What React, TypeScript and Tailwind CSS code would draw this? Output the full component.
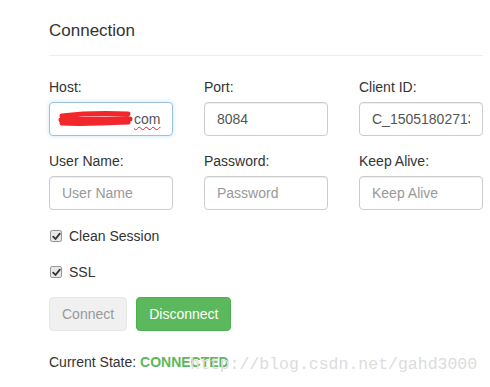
import React from 'react';

const fieldClass =
  'h-[34px] w-full rounded-[4px] border border-[#ccc] bg-white px-[12px] text-[14px] text-[#555] placeholder:text-[#999] shadow-[inset_0_1px_1px_rgba(0,0,0,0.075)] outline-none';

const CheckMark: React.FC = () => (
  <span className="flex h-[12px] w-[12px] items-center justify-center rounded-[2px] border border-[#9a9a9a] bg-[#e8e8e8]">
    <svg width="9" height="9" viewBox="0 0 9 9" fill="none">
      <path d="M1.2 4.6 L3.5 7 L7.8 1.6" stroke="#333" strokeWidth="1.8" strokeLinecap="round" strokeLinejoin="round" />
    </svg>
  </span>
);

const Field: React.FC<{ label: string; children: React.ReactNode }> = ({ label, children }) => (
  <div className="flex flex-col gap-[5px]">
    <label className="text-[14px] leading-[20px] text-[#333]">{label}</label>
    {children}
  </div>
);

export default function App() {
  return (
    <div
      className="relative h-[387px] w-[490px] overflow-hidden bg-white pl-[49px] pt-[21px]"
      style={{ fontFamily: '"Liberation Sans", Arial, sans-serif' }}
    >
      <div className="w-[434px] border-b border-[#eee] pb-[14px]">
        <h4 className="text-[17px] leading-[20px] text-[#333]">Connection</h4>
      </div>

      <div className="mt-[21px] grid w-[434px] grid-cols-[124px_124px_124px] gap-x-[31px] gap-y-[15px]">
        <Field label="Host:">
          <div className="flex h-[34px] w-full items-center rounded-[4px] border border-[#9cc2e2] bg-white pl-[6px] text-[14px] text-[#555] shadow-[0_0_4px_rgba(102,175,233,0.35)]">
            <svg width="78" height="20" viewBox="0 0 78 20" className="shrink-0">
              <path
                d="M6 7 C 22 5, 48 4, 72 5 M5 11 C 25 10, 50 10, 74 10 M6 14 C 24 15, 50 14, 72 13"
                stroke="#f2262b"
                strokeWidth="5"
                strokeLinecap="round"
                fill="none"
              />
            </svg>
            <span className="underline decoration-wavy decoration-[#e02020] decoration-1 underline-offset-2">com</span>
          </div>
        </Field>
        <Field label="Port:">
          <input className={fieldClass} defaultValue="8084" />
        </Field>
        <Field label="Client ID:">
          <input className={fieldClass} defaultValue="C_1505180271342" />
        </Field>
        <Field label="User Name:">
          <input className={fieldClass} placeholder="User Name" />
        </Field>
        <Field label="Password:">
          <input className={fieldClass} placeholder="Password" />
        </Field>
        <Field label="Keep Alive:">
          <input className={fieldClass} placeholder="Keep Alive" />
        </Field>
      </div>

      <div className="mt-[16px] flex flex-col gap-[16px]">
        <div className="flex items-center gap-[7px] pl-[1px] text-[14px] leading-[20px] text-[#333]">
          <CheckMark />
          <span>Clean Session</span>
        </div>
        <div className="flex items-center gap-[7px] pl-[1px] text-[14px] leading-[20px] text-[#333]">
          <CheckMark />
          <span>SSL</span>
        </div>
      </div>

      <div className="mt-[15px] flex gap-[9px]">
        <button className="h-[34px] rounded-[4px] border border-[#e6e6e6] bg-[#f0f0f0] px-[12px] text-[14px] text-[#999]">
          Connect
        </button>
        <button className="h-[34px] rounded-[4px] border border-[#4cae4c] bg-[#5cb85c] px-[12px] text-[14px] text-white">
          Disconnect
        </button>
      </div>

      <p className="mt-[21px] text-[14px] leading-[20px] text-[#333]">
        Current State: <span className="font-bold text-[#5cb85c]">CONNECTED</span>
      </p>

      <span
        className="pointer-events-none absolute left-[190px] top-[355px] text-[16.5px] leading-[20px] text-[#dcdcdc]"
        style={{ fontFamily: '"Liberation Mono", "Courier New", monospace' }}
      >
        http://blog.csdn.net/gahd3000
      </span>
    </div>
  );
}
